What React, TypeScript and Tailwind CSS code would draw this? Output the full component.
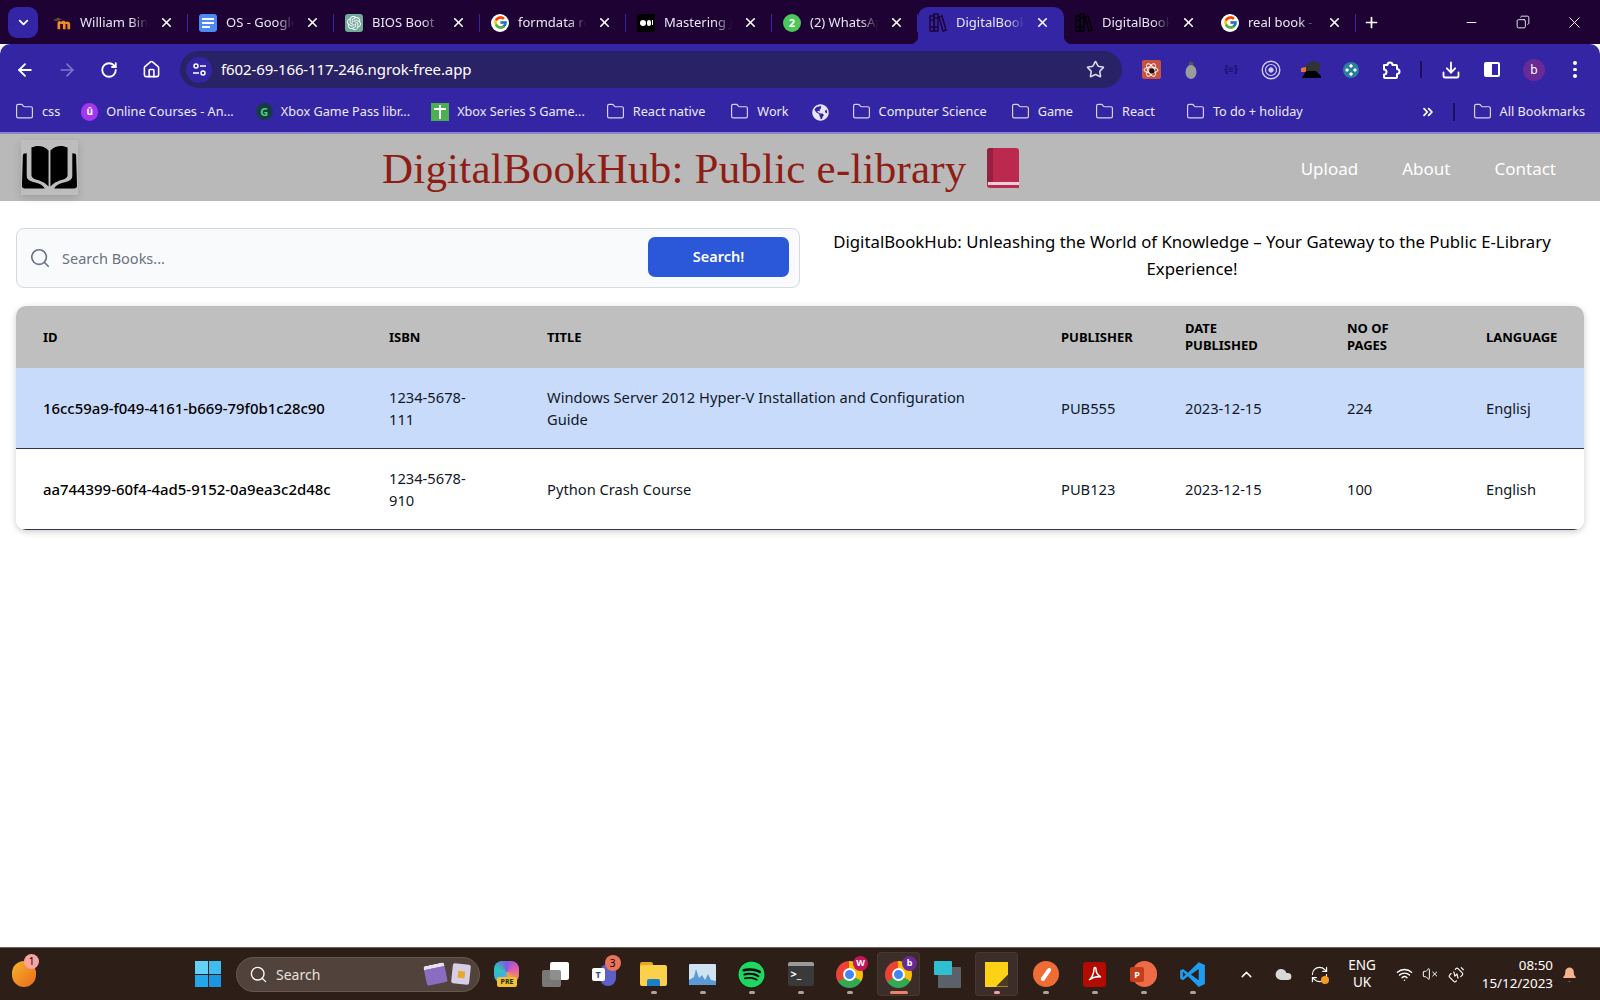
import React from "react";
import {
  ChevronDown, X, ArrowLeft, ArrowRight, RotateCw, Home, Star, Download, ChevronsRight,
  Search, Plus, Minus, Copy, Folder, ChevronUp, Cloud, Wifi, VolumeX, Bell, RefreshCw, BatteryCharging,
} from "lucide-react";
import { FcGoogle } from "react-icons/fc";
import { FaSpotify, FaGlobeAmericas } from "react-icons/fa";
import { SiOpenai } from "react-icons/si";

const ChromeFont = "font-['Noto_Sans','Open_Sans',sans-serif]";

function BookLogo({ size = 30, color = "#000" }: { size?: number; color?: string }) {
  return (
    <svg width={size} height={size} viewBox="0 0 60 48" fill={color}>
      <path d="M11 3c6-3 13-2 18 3v38c-4-5-11-7-15-8-2-1-3-2-3-4z" />
      <path d="M49 3c-6-3-13-2-18 3v38c4-5 11-7 15-8 2-1 3-2 3-4z" />
      <path d="M2 11c0-1 1-2 4-2v24c0 3 2 5 6 6 5 1 11 3 13 7H4c-2 0-3-1-3-3z" />
      <path d="M58 11c0-1-1-2-4-2v24c0 3-2 5-6 6-5 1-11 3-13 7h21c2 0 3-1 3-3z" />
    </svg>
  );
}

function Moodle() {
  return (
    <svg width="20" height="18" viewBox="0 0 20 18">
      <path d="M0 6l6-3 4 2-6 2z" fill="#5a4a40" />
      <path d="M5 16V9c0-2 3-3 4-1 1-2 4-2 5 0 1-1 5-1 5 2v6h-3v-6h-2v6h-3v-6H8v6z" fill="#f08a24" />
    </svg>
  );
}

function Docs() {
  return (
    <div className="w-[18px] h-[18px] rounded-[3px] bg-[#4c8bf5] flex flex-col justify-center gap-[2px] px-[3px]">
      <div className="h-[2px] bg-white" />
      <div className="h-[2px] bg-white" />
      <div className="h-[2px] w-[8px] bg-white" />
    </div>
  );
}

function Gpt() {
  return (
    <div className="w-[18px] h-[18px] rounded-[3px] bg-[#74aa9c] flex items-center justify-center text-white">
      <SiOpenai size={14} />
    </div>
  );
}

function Medium() {
  return (
    <div className="w-[18px] h-[18px] bg-black flex items-center justify-center gap-[1px]">
      <div className="w-[6px] h-[6px] rounded-full bg-white" />
      <div className="w-[4px] h-[6px] rounded-full bg-white" />
      <div className="w-[1px] h-[5px] bg-white" />
    </div>
  );
}

function Whats() {
  return (
    <div className="relative w-[18px] h-[18px] rounded-full bg-[#4cc75a] flex items-center justify-center">
      <span className="text-[11px] font-bold text-white leading-none">2</span>
    </div>
  );
}

function Books({ color }: { color: string }) {
  return (
    <svg width="18" height="20" viewBox="0 0 18 20" fill="none" stroke={color} strokeWidth="1.4">
      <rect x="1" y="3" width="4" height="15" />
      <rect x="5" y="1" width="4" height="17" />
      <path d="M10 4l3-1 4 14-3 1z" />
      <path d="M1 7h4M5 5h4M1 14h4M5 14h4" />
    </svg>
  );
}

const G = () => (
  <div className="w-[18px] h-[18px] rounded-full bg-white flex items-center justify-center">
    <FcGoogle size={15} />
  </div>
);

const tabs = [
  { icon: <Moodle />, title: "William Binary" },
  { icon: <Docs />, title: "OS - Google Docs" },
  { icon: <Gpt />, title: "BIOS Boot Process" },
  { icon: <G />, title: "formdata react" },
  { icon: <Medium />, title: "Mastering JavaScript" },
  { icon: <Whats />, title: "(2) WhatsApp" },
  { icon: <Books color="#1e0233" />, title: "DigitalBookHub", active: true },
  { icon: <Books color="#000" />, title: "DigitalBookHub", noSep: true },
  { icon: <G />, title: "real book - Google" },
];

function Tab({ icon, title, active, noSep }: { icon: React.ReactNode; title: string; active?: boolean; noSep?: boolean }) {
  return (
    <div
      className={`relative flex items-center w-[146px] h-[37px] shrink-0 pl-[11px] pb-[6px] ${
        active ? "bg-[#3425a5] rounded-t-[10px]" : ""
      }`}
    >
      {active && (
        <>
          <div className="absolute bottom-0 -left-[8px] w-[8px] h-[8px] bg-[radial-gradient(circle_at_0_0,transparent_8px,#3425a5_8.5px)]" />
          <div className="absolute bottom-0 -right-[8px] w-[8px] h-[8px] bg-[radial-gradient(circle_at_100%_0,transparent_8px,#3425a5_8.5px)]" />
        </>
      )}
      <div className="w-[18px] flex justify-center shrink-0">{icon}</div>
      <div className="ml-[9px] w-[68px] overflow-hidden whitespace-nowrap text-[13px] text-[#e9e6f2] [mask-image:linear-gradient(to_right,black_75%,transparent)]">
        {title}
      </div>
      <X size={15} strokeWidth={2.6} className="ml-[11px] text-white shrink-0" />
      {!active && !noSep && <div className="absolute right-0 top-[7px] h-[18px] w-[1.5px] bg-[#3425a5]" />}
    </div>
  );
}

function TabStrip() {
  return (
    <div className="flex items-end h-[44px] bg-[#1e0233] relative">
      <div className="absolute left-[8px] top-[7px] w-[30px] h-[31px] rounded-[9px] bg-[#3425a5] flex items-center justify-center">
        <ChevronDown size={15} strokeWidth={3} className="text-white" />
      </div>
      <div className="flex ml-[42px]">
        {tabs.map((t, i) => (
          <Tab key={i} {...t} />
        ))}
      </div>
      <div className="h-[37px] flex items-center ml-[7px] pb-[6px]">
        <Plus size={17} strokeWidth={2.4} className="text-white" />
      </div>
      <div className="ml-auto h-[44px] flex items-center text-white">
        <div className="w-[50px] flex justify-center pr-[4px]"><Minus size={15} strokeWidth={1.5} /></div>
        <div className="w-[50px] flex justify-center"><Copy size={14} strokeWidth={1.5} className="-scale-x-100" /></div>
        <div className="w-[52px] flex justify-center"><X size={19} strokeWidth={1.2} /></div>
      </div>
    </div>
  );
}

function ExtSlot({ children, w = "w-[40px]" }: { children: React.ReactNode; w?: string }) {
  return <div className={`${w} h-[38px] flex items-center justify-center shrink-0`}>{children}</div>;
}

function Toolbar() {
  return (
    <div className="flex items-center h-[48px] pl-[4px] pt-[3px]">
      <ExtSlot w="w-[42px]"><ArrowLeft size={20} strokeWidth={2.2} className="text-white" /></ExtSlot>
      <ExtSlot w="w-[42px]"><ArrowRight size={20} strokeWidth={2} className="text-[#7d78c9]" /></ExtSlot>
      <ExtSlot w="w-[42px]"><RotateCw size={18} strokeWidth={2.4} className="text-white" /></ExtSlot>
      <ExtSlot w="w-[42px]"><Home size={19} strokeWidth={2} className="text-white" /></ExtSlot>
      <div className="ml-[8px] w-[942px] h-[37px] rounded-full bg-[#2a2266] flex items-center pl-[6px] pr-[17px] shrink-0">
        <div className="w-[26px] h-[26px] rounded-full bg-[#3425a5] flex items-center justify-center">
          <svg width="15" height="15" viewBox="0 0 15 15" fill="none" stroke="#fff" strokeWidth="1.5">
            <circle cx="4" cy="4" r="2" />
            <path d="M8 4h6M1 11h6" />
            <circle cx="11" cy="11" r="2" />
          </svg>
        </div>
        <span className="ml-[9px] text-[15px] text-white tracking-[-0.1px]">f602-69-166-117-246.ngrok-free.app</span>
        <Star size={19} strokeWidth={2} className="ml-auto text-[#dcdcf0]" />
      </div>
      <div className="ml-[9px] flex items-center">
        <ExtSlot>
          <div className="w-[19px] h-[19px] rounded-[2px] bg-[#c8523f] flex items-center justify-center">
            <svg width="16" height="16" viewBox="0 0 16 16" fill="none" stroke="#fff" strokeWidth="1">
              <ellipse cx="8" cy="8" rx="7" ry="3" />
              <ellipse cx="8" cy="8" rx="7" ry="3" transform="rotate(60 8 8)" />
              <ellipse cx="8" cy="8" rx="7" ry="3" transform="rotate(120 8 8)" />
              <circle cx="9" cy="9" r="2.6" fill="#111" stroke="none" />
            </svg>
          </div>
        </ExtSlot>
        <ExtSlot>
          <svg width="14" height="20" viewBox="0 0 14 20">
            <circle cx="7" cy="4" r="2.5" fill="#555" />
            <ellipse cx="7" cy="12" rx="5.5" ry="7" fill="#9b9b9b" />
          </svg>
        </ExtSlot>
        <ExtSlot><span className="text-[10px] font-bold text-[#14106a]">{"{≡}"}</span></ExtSlot>
        <ExtSlot>
          <svg width="20" height="20" viewBox="0 0 20 20" fill="none" stroke="#cfcdee">
            <circle cx="10" cy="10" r="8.8" strokeWidth="1.4" />
            <circle cx="10" cy="10" r="5.5" strokeWidth="1.2" />
            <circle cx="10" cy="10" r="2.2" fill="#cfcdee" />
          </svg>
        </ExtSlot>
        <ExtSlot>
          <svg width="21" height="19" viewBox="0 0 21 19">
            <path d="M3 7l8-6 8 2v8H3z" fill="#333" />
            <path d="M0 8l5-1v5H0z" fill="#e8743b" />
            <path d="M1 18l4-7h10l5 5v2z" fill="#000" />
          </svg>
        </ExtSlot>
        <ExtSlot>
          <div className="w-[16px] h-[16px] rounded-full bg-[#2b7f9e] flex items-center justify-center">
            <svg width="12" height="12" viewBox="0 0 12 12" fill="#fff">
              <rect x="4.5" y="0.5" width="3" height="3" transform="rotate(45 6 2)" />
              <rect x="4.5" y="8.5" width="3" height="3" transform="rotate(45 6 10)" />
              <rect x="0.5" y="4.5" width="3" height="3" transform="rotate(45 2 6)" />
              <rect x="8.5" y="4.5" width="3" height="3" transform="rotate(45 10 6)" />
            </svg>
          </div>
        </ExtSlot>
        <ExtSlot>
          <svg width="20" height="20" viewBox="0 0 20 20" fill="none" stroke="#fff" strokeWidth="2" strokeLinejoin="round">
            <path d="M3 5h3.5a2.5 2.5 0 0 1 5 0H15a1 1 0 0 1 1 1v3a2.5 2.5 0 0 1 0 5v3a1 1 0 0 1-1 1H4a1 1 0 0 1-1-1v-2.5a2.5 2.5 0 0 0 0-5z" />
          </svg>
        </ExtSlot>
        <div className="w-[20px] flex justify-center"><div className="w-[1.5px] h-[17px] bg-[#1e0f5c]" /></div>
        <ExtSlot><Download size={20} strokeWidth={2.2} className="text-white" /></ExtSlot>
        <ExtSlot w="w-[42px]">
          <div className="w-[16px] h-[15px] rounded-[2px] border-2 border-white flex">
            <div className="w-1/2 bg-white ml-0" />
          </div>
        </ExtSlot>
        <ExtSlot w="w-[42px]">
          <div className="w-[22px] h-[22px] rounded-full bg-[#6a2a96] flex items-center justify-center text-[12px] text-white">b</div>
        </ExtSlot>
        <ExtSlot>
          <div className="flex flex-col gap-[3px]">
            <div className="w-[3.5px] h-[3.5px] rounded-full bg-white" />
            <div className="w-[3.5px] h-[3.5px] rounded-full bg-white" />
            <div className="w-[3.5px] h-[3.5px] rounded-full bg-white" />
          </div>
        </ExtSlot>
      </div>
    </div>
  );
}

function Bm({ icon, label, cls }: { icon?: React.ReactNode; label: string; cls: string }) {
  return (
    <div className={`flex items-center shrink-0 whitespace-nowrap ${cls}`}>
      {icon ?? <Folder size={19} strokeWidth={1.5} className="text-[#d5d3ee]" />}
      <span className="ml-[8px] text-[12.7px] text-[#eceaf8]">{label}</span>
    </div>
  );
}

function Bookmarks() {
  return (
    <div className="flex items-center h-[40px] pl-[15px] border-b-2 border-[#8b84c8] box-content">
      <Bm label="css" cls="" />
      <Bm
        cls="ml-[21px]"
        label="Online Courses - An..."
        icon={
          <div className="w-[17px] h-[18px] rounded-full bg-[#a435f0] flex items-center justify-center text-[10px] text-white font-bold">û</div>
        }
      />
      <Bm
        cls="ml-[22px]"
        label="Xbox Game Pass libr..."
        icon={
          <div className="w-[17px] h-[17px] rounded-full bg-[#173b46] flex items-center justify-center text-[11px] text-[#4bd37b] font-bold">G</div>
        }
      />
      <Bm
        cls="ml-[21px]"
        label="Xbox Series S Game..."
        icon={
          <div className="w-[18px] h-[18px] bg-[#4caf50] flex items-center justify-center relative">
            <div className="w-[2.5px] h-[14px] bg-white" />
            <div className="absolute top-[5px] w-[12px] h-[2.5px] bg-white" />
          </div>
        }
      />
      <Bm cls="ml-[21px]" label="React native" />
      <Bm cls="ml-[25px]" label="Work" />
      <div className="ml-[23px] shrink-0"><FaGlobeAmericas size={17} className="text-[#e8e6f6]" /></div>
      <Bm cls="ml-[23px]" label="Computer Science" />
      <Bm cls="ml-[24px]" label="Game" />
      <Bm cls="ml-[22px]" label="React" />
      <Bm cls="ml-[31px]" label="To do + holiday" />
      <div className="ml-auto flex items-center pr-[15px]">
        <ChevronsRight size={16} strokeWidth={2.6} className="text-white" />
        <div className="ml-[17px] w-[1.5px] h-[18px] bg-[#1e0f5c]" />
        <Bm cls="ml-[18px]" label="All Bookmarks" />
      </div>
    </div>
  );
}

function SiteHeader() {
  return (
    <header className="h-[67px] bg-[#b9b9b9] flex items-center relative">
      <div className="ml-[21px] w-[57px] h-[55px] shrink-0 bg-[#bdbdbd] shadow-[0_3px_8px_rgba(0,0,0,0.15)] flex items-center justify-center">
        <BookLogo size={57} />
      </div>
      <div className="ml-[304px] flex items-center">
        <h1 className="font-['Liberation_Serif',serif] text-[#8f1d14] text-[43px] tracking-[0.2px] leading-none whitespace-nowrap pt-[1px]">
          DigitalBookHub: Public e-library
        </h1>
        <svg className="ml-[21px]" width="32" height="40" viewBox="0 0 32 40">
          <path d="M3 0h26a3 3 0 0 1 3 3v37H3a3 3 0 0 1-3-3V3a3 3 0 0 1 3-3z" fill="#bb2a4e" />
          <path d="M0 3a3 3 0 0 1 3-3h3v34H0z" fill="#96203f" />
          <rect x="1" y="34" width="31" height="3" fill="#f0d0d4" />
        </svg>
      </div>
      <nav className="ml-auto mr-[44px] pt-[2px] flex gap-[44px] text-[17px] text-white font-['Noto_Sans',sans-serif]">
        <span>Upload</span>
        <span>About</span>
        <span>Contact</span>
      </nav>
    </header>
  );
}

const headCls = "px-[27px] text-left text-[13px] font-bold uppercase text-black leading-[17px]";
const cellCls = "px-[27px] text-[14.7px] leading-[22px] text-[#111827]";

const rows = [
  ["16cc59a9-f049-4161-b669-79f0b1c28c90", "1234-5678-111", "Windows Server 2012 Hyper-V Installation and Configuration Guide", "PUB555", "2023-12-15", "224", "Englisj"],
  ["aa744399-60f4-4ad5-9152-0a9ea3c2d48c", "1234-5678-910", "Python Crash Course", "PUB123", "2023-12-15", "100", "English"],
];

function BooksTable() {
  return (
    <div className="mx-[16px] mt-[18px] rounded-[10px] overflow-hidden shadow-[0_2px_6px_rgba(0,0,0,0.2)]">
      <table className="w-full table-fixed border-collapse">
        <colgroup>
          <col className="w-[346px]" />
          <col className="w-[158px]" />
          <col className="w-[514px]" />
          <col className="w-[124px]" />
          <col className="w-[162px]" />
          <col className="w-[139px]" />
          <col className="w-[125px]" />
        </colgroup>
        <thead>
          <tr className="h-[62px] bg-[#bfbfbf]">
            <th className={headCls}>ID</th>
            <th className={headCls}>ISBN</th>
            <th className={headCls}>Title</th>
            <th className={`${headCls} !pr-0`}>Publisher</th>
            <th className={headCls}>Date Published</th>
            <th className={headCls}>No of Pages</th>
            <th className={`${headCls} !pl-[27px] !pr-0`}>Language</th>
          </tr>
        </thead>
        <tbody>
          {rows.map((r, i) => (
            <tr key={r[0]} className={`border-b-[1.5px] border-[#2f3747] ${i === 0 ? "h-[80px] bg-[#c9dbfb]" : "h-[81px] bg-white"}`}>
              <td className={`${cellCls} !text-[14.9px] font-medium text-black !pr-0 whitespace-nowrap`}>{r[0]}</td>
              <td className={`${cellCls} !pr-[45px]`}>{r[1]}</td>
              <td className={cellCls}>{r[2]}</td>
              {r.slice(3).map((c, j) => (
                <td key={j} className={cellCls}>{c}</td>
              ))}
            </tr>
          ))}
        </tbody>
      </table>
    </div>
  );
}

function TaskIcon({ children, dot, active }: { children: React.ReactNode; dot?: string; active?: boolean }) {
  return (
    <div className="relative w-[49px] h-[44px] flex flex-col items-center justify-center shrink-0">
      {active && <div className="absolute inset-x-[3px] inset-y-0 rounded-[4px] bg-[rgba(255,255,255,0.07)] border border-[rgba(255,255,255,0.05)]" />}
      <div className="relative">{children}</div>
      {dot && <div className={`absolute bottom-[2px] h-[3px] rounded-full ${dot}`} />}
    </div>
  );
}

const dotGrey = "w-[6px] bg-[#a8a4a0]";

function ChromeIcon({ badge, color }: { badge: string; color: string }) {
  return (
    <div className="relative w-[27px] h-[27px] rounded-full bg-[conic-gradient(#fbbc05_0_33%,#34a853_33%_66%,#ea4335_66%_100%)] flex items-center justify-center">
      <div className="w-[13px] h-[13px] rounded-full bg-[#4285f4] border-2 border-white" />
      <div className={`absolute -top-[5px] -right-[5px] w-[15px] h-[15px] rounded-full text-[9px] text-white font-bold flex items-center justify-center ${color}`}>{badge}</div>
    </div>
  );
}

function Taskbar() {
  return (
    <div className={`h-[53px] bg-[#2e1e18] border-t border-[#6f625c] flex items-center text-white ${ChromeFont} mt-auto`}>
      <div className="relative ml-[12px] w-[24px] h-[26px] rounded-full bg-[linear-gradient(135deg,#f5b42a,#ea6a1c)]">
        <div className="absolute -top-[7px] left-[12px] w-[15px] h-[15px] rounded-full bg-[#f9a3a3] text-[10px] text-black flex items-center justify-center">1</div>
      </div>
      <div className="ml-[159px] grid grid-cols-2 gap-[1px] w-[26px] h-[26px]">
        <div className="bg-[#63d0f7]" />
        <div className="bg-[#3fbcf0]" />
        <div className="bg-[#23a7ec]" />
        <div className="bg-[#1a95e0]" />
      </div>
      <div className="ml-[15px] w-[244px] h-[35px] rounded-full bg-[#51433c] border border-[#665952] flex items-center pl-[12px] pr-[9px]">
        <Search size={19} strokeWidth={1.7} className="text-white" />
        <span className="ml-[8px] text-[14px] text-[#e7e2df]">Search</span>
        <div className="ml-auto flex items-center gap-[6px]">
          <div className="w-[21px] h-[20px] -rotate-12 rounded-[2px] bg-[#8a6cc0] border-t-4 border-[#e8e2f0]" />
          <div className="w-[18px] h-[20px] rotate-6 rounded-[2px] bg-[#d7cfe6] flex items-center justify-center">
            <div className="w-[7px] h-[7px] bg-[#e9a928]" />
          </div>
        </div>
      </div>
      <div className="ml-[2px] flex items-center">
        <TaskIcon>
          <div className="relative w-[25px] h-[26px]">
            <div className="w-[25px] h-[22px] rounded-[8px] bg-[conic-gradient(#7b5be0,#e35bb2,#f1a43c,#3fa9f5,#2ec4b6,#7b5be0)]" />
            <div className="absolute bottom-0 left-[3px] w-[20px] h-[10px] bg-[#f2c230] text-[7px] leading-[10px] text-[#222] font-bold text-center rounded-[2px]">PRE</div>
          </div>
        </TaskIcon>
        <TaskIcon>
          <div className="relative w-[27px] h-[25px]">
            <div className="absolute right-0 top-0 w-[19px] h-[18px] bg-white rounded-[2px]" />
            <div className="absolute left-0 bottom-0 w-[19px] h-[17px] bg-[rgba(130,130,130,0.9)] rounded-[2px]" />
          </div>
        </TaskIcon>
        <TaskIcon>
          <div className="relative w-[26px] h-[26px]">
            <div className="absolute right-[2px] top-[3px] w-[16px] h-[22px] rounded-[8px] bg-[#5b5fc7]" />
            <div className="absolute left-0 top-[7px] w-[13px] h-[13px] bg-white rounded-[2px] text-[9px] leading-[13px] font-bold text-[#3b3f9e] text-center">T</div>
            <div className="absolute -top-[6px] right-[-3px] w-[16px] h-[16px] rounded-full bg-[#e9745a] text-[10px] text-black flex items-center justify-center">3</div>
          </div>
        </TaskIcon>
        <TaskIcon dot={dotGrey}>
          <div className="w-[27px] h-[24px] relative">
            <div className="absolute top-0 left-0 w-[13px] h-[5px] bg-[#e8a81e] rounded-t-[2px]" />
            <div className="absolute top-[3px] inset-x-0 bottom-0 bg-[#fbd04b] rounded-[2px]" />
            <div className="absolute bottom-0 left-[7px] w-[13px] h-[7px] bg-[#1e7fc7] rounded-t-[2px]" />
          </div>
        </TaskIcon>
        <TaskIcon dot={dotGrey}>
          <div className="w-[27px] h-[21px] bg-[#cfe3f2] flex items-end overflow-hidden rounded-[1px]">
            <svg width="27" height="21" viewBox="0 0 27 21">
              <path d="M0 21V16l5-3 2-8 3 9 3-3 3 5 3-6 3 6 5 1v4z" fill="#5a9bd5" />
            </svg>
          </div>
        </TaskIcon>
        <TaskIcon dot={dotGrey}><div className="bg-black rounded-full"><FaSpotify size={27} className="text-[#1ed760]" /></div></TaskIcon>
        <TaskIcon dot={dotGrey}>
          <div className="w-[26px] h-[24px] bg-[#3a3a3a] rounded-[2px] border-t-[4px] border-[#9a9a9a] pl-[3px] pt-[2px] text-[11px] font-bold leading-[12px] text-white">
            &gt;_
          </div>
        </TaskIcon>
        <TaskIcon dot={dotGrey}><ChromeIcon badge="W" color="bg-[#c2185b]" /></TaskIcon>
        <TaskIcon active dot="w-[18px] bg-[#ee7f6b]"><ChromeIcon badge="b" color="bg-[#6a2a96]" /></TaskIcon>
        <TaskIcon>
          <div className="relative w-[27px] h-[27px]">
            <div className="absolute right-0 bottom-0 w-[23px] h-[21px] bg-[#5b6169] rounded-[1px]" />
            <div className="absolute left-0 top-0 w-[18px] h-[14px] bg-[#2fbfd0] rounded-[1px]" />
          </div>
        </TaskIcon>
        <TaskIcon active dot="w-[6px] bg-[#f59bb0]">
          <div className="w-[23px] h-[25px] bg-[#fcd116] relative overflow-hidden">
            <div className="absolute right-0 bottom-0 w-[12px] h-[12px] bg-[#4a3b28] [clip-path:polygon(100%_0,100%_100%,0_100%)]" />
          </div>
        </TaskIcon>
        <TaskIcon dot={dotGrey}>
          <div className="w-[26px] h-[26px] rounded-full bg-[#ef6c35] flex items-center justify-center">
            <div className="w-[4px] h-[15px] bg-white rotate-[35deg] rounded-full" />
          </div>
        </TaskIcon>
        <TaskIcon dot={dotGrey}>
          <div className="w-[23px] h-[25px] rounded-[3px] bg-[#b30b00] flex items-center justify-center">
            <svg width="16" height="16" viewBox="0 0 16 16" fill="none" stroke="#fff" strokeWidth="1.5">
              <path d="M2 14c3-2 5-7 5-11 0-2 2-2 2 0 0 4 3 7 5 8-4-1-8 0-12 3z" />
            </svg>
          </div>
        </TaskIcon>
        <TaskIcon dot={dotGrey}>
          <div className="relative w-[27px] h-[26px]">
            <div className="absolute right-0 top-0 w-[25px] h-[26px] rounded-full bg-[#ed6c47]" />
            <div className="absolute left-0 top-[6px] w-[14px] h-[15px] bg-[#c43e1c] rounded-[2px] text-[9px] leading-[15px] font-bold text-center text-white">P</div>
          </div>
        </TaskIcon>
        <TaskIcon dot={dotGrey}>
          <svg width="27" height="27" viewBox="0 0 24 24">
            <path d="M17.5 1L8 10.5 3.5 7 1 8.5v7L3.5 17 8 13.5l9.5 9.5L23 20.5v-17z" fill="#1f9cf0" />
            <path d="M17.5 7v10L10.5 12z" fill="#2e1e18" />
            <path d="M3.5 9.5v5L6 12z" fill="#2e1e18" />
          </svg>
        </TaskIcon>
      </div>
      <ChevronUp size={17} strokeWidth={2} className="ml-[21px]" />
      <Cloud size={19} fill="#d8d8d8" strokeWidth={0} className="ml-[19px]" />
      <div className="ml-[17px] relative">
        <RefreshCw size={19} strokeWidth={1.4} />
        <div className="absolute right-0 bottom-0 w-[8px] h-[8px] rounded-full bg-[#f59a23]" />
      </div>
      <div className="ml-[16px] w-[34px] text-center text-[13.5px] leading-[17px]">ENG<br />UK</div>
      <Wifi size={17} strokeWidth={2} className="ml-[17px]" />
      <VolumeX size={16} strokeWidth={1.5} className="ml-[9px]" />
      <BatteryCharging size={18} strokeWidth={1.5} className="ml-[10px] -rotate-45" />
      <div className="ml-auto text-right text-[13.4px] leading-[18px]">08:50<br />15/12/2023</div>
      <Bell size={17} fill="#f7b28e" strokeWidth={0} className="ml-[8px] mr-[22px]" />
    </div>
  );
}

export default function App() {
  return (
    <div className={`w-[1600px] h-[1000px] flex flex-col overflow-hidden bg-white ${ChromeFont}`}>
      <TabStrip />
      <div className="bg-[#3425a5] rounded-t-[10px]">
        <Toolbar />
        <Bookmarks />
      </div>
      <SiteHeader />
      <div className="flex items-center mt-[27px] px-[16px]">
        <div className="w-[784px] h-[60px] shrink-0 rounded-[8px] border border-[#d5d8de] bg-[#f9fafb] flex items-center pl-[12px] pr-[10px]">
          <Search size={22} strokeWidth={1.8} className="text-[#6b7280]" />
          <span className="ml-[11px] pt-[1px] text-[14.5px] text-[#6b7280]">Search Books...</span>
          <button className="ml-auto mb-[2px] w-[141px] h-[40px] rounded-[7px] bg-[#2b57d9] text-white text-[14.5px] font-semibold">Search!</button>
        </div>
        <p className="flex-1 ml-[16px] mr-[16px] mb-[5px] text-center text-[16.75px] leading-[26.5px] text-black">
          DigitalBookHub: Unleashing the World of Knowledge – Your Gateway to the Public E-Library Experience!
        </p>
      </div>
      <BooksTable />
      <Taskbar />
    </div>
  );
}
